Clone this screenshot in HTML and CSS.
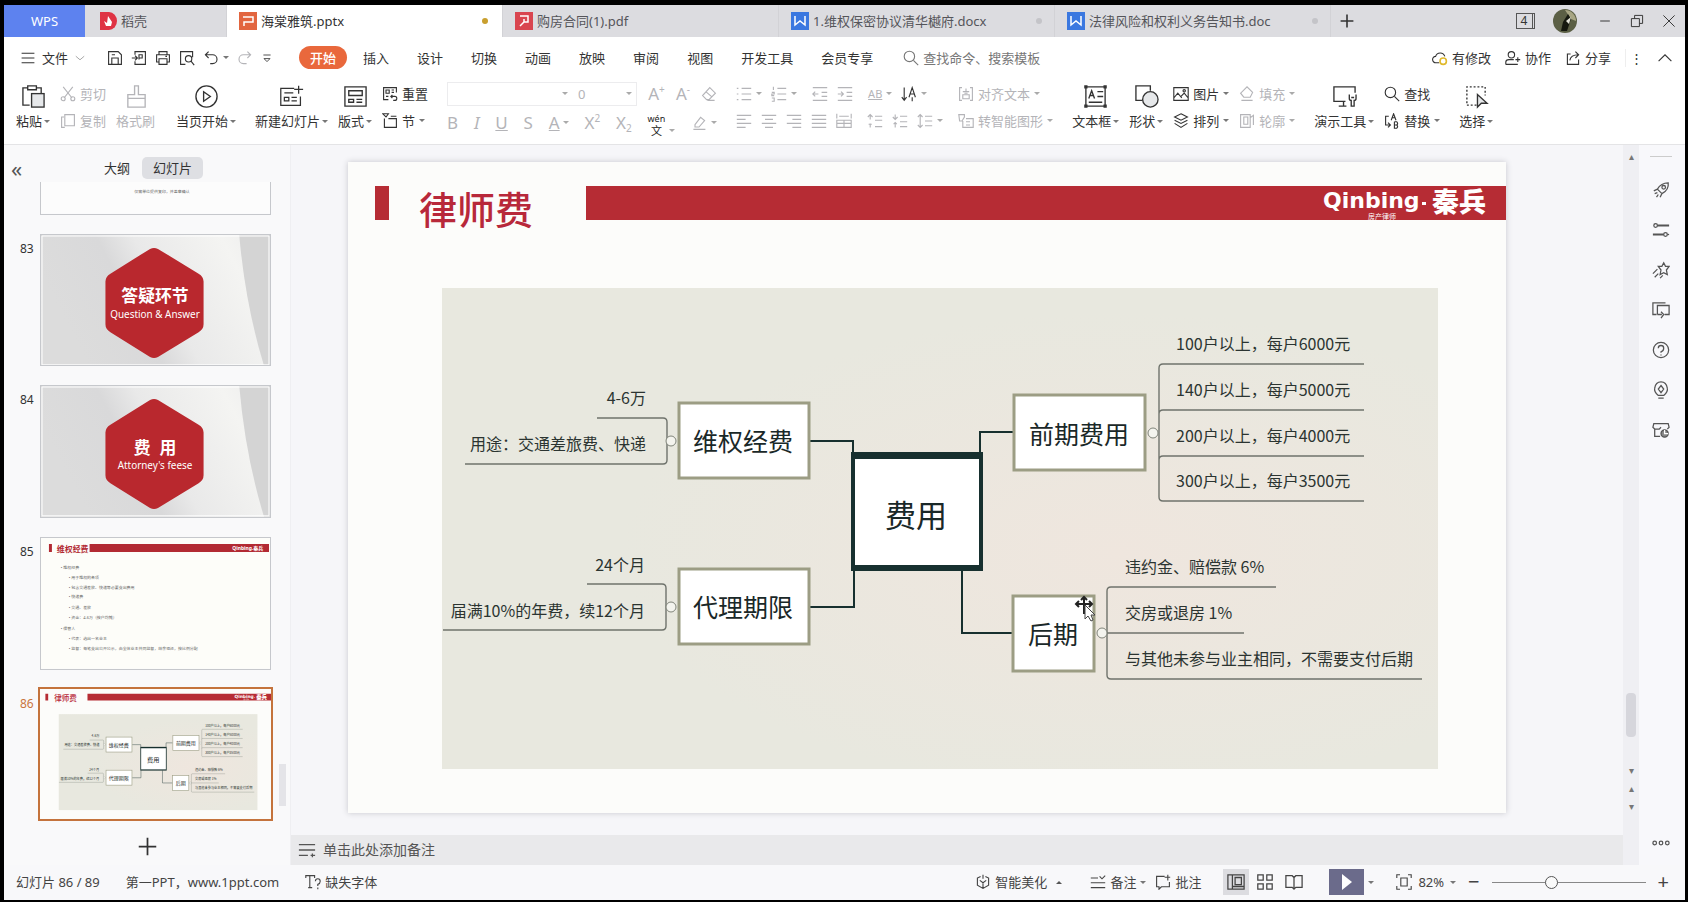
FILE: index.html
```html
<!DOCTYPE html>
<html lang="zh-CN">
<head>
<meta charset="utf-8">
<title>海棠雅筑.pptx - WPS</title>
<link rel="stylesheet" href="styles.css">
</head>
<body>
<svg class="sprite" aria-hidden="true">
  <symbol id="menu" viewBox="0 0 20 20"><path d="M2 4h16M2 10h16M2 16h16"/></symbol>
  <symbol id="down" viewBox="0 0 20 20"><path d="M3 7l7 6 7-6"/></symbol>
  <symbol id="up" viewBox="0 0 20 20"><path d="M2 14l8-8 8 8"/></symbol>
  <symbol id="save" viewBox="0 0 20 20"><path d="M2 2h12l4 4v12H2zM6 18v-8h8v8M6 6h4"/></symbol>
  <symbol id="export" viewBox="0 0 20 20"><path d="M5 6V2h13v16H5v-4M1 10h7M5 7l3 3-3 3M10 12V6h4v4h-4"/></symbol>
  <symbol id="print" viewBox="0 0 20 20"><path d="M5 6V2h10v4M5 15H2V6h16v9h-3M5 11h10v7H5zM13 8h2"/></symbol>
  <symbol id="preview" viewBox="0 0 20 20"><path d="M8 18H2V2h15v7M15 14l4 5"/><circle cx="12" cy="11" r="4"/></symbol>
  <symbol id="undo" viewBox="0 0 20 20"><path d="M7 2L3 6l4 4M3 6h9a5 5 0 0 1 0 11H9"/></symbol>
  <symbol id="redo" viewBox="0 0 20 20"><path d="M13 2l4 4-4 4M17 6H8a5 5 0 0 0 0 11h4"/></symbol>
  <symbol id="more" viewBox="0 0 20 20"><path d="M4 5h12M5 11l5 5 5-5z"/></symbol>
  <symbol id="search" viewBox="0 0 20 20"><circle cx="8" cy="8" r="6.5"/><path d="M13 13l6 6"/></symbol>
  <symbol id="cloud" viewBox="0 0 20 20"><path d="M9 16H5a4 4 0 0 1-.5-8A6 6 0 0 1 16 8"/><circle cx="14" cy="14" r="4" stroke="#e0b92c" stroke-width="2"/></symbol>
  <symbol id="people" viewBox="0 0 20 20"><circle cx="8" cy="6" r="4"/><path d="M1 18v-3q0-3 4-3h6M1 18h15M16 9v6M13 12h6"/></symbol>
  <symbol id="share" viewBox="0 0 20 20"><path d="M7 5H3v13h14v-6M6 13q1-7 11-7M13 2l4 4-4 4"/></symbol>
  <symbol id="paste" viewBox="0 0 26 26"><path d="M9 22H2V4h5M16 4h5v6M7 2h9v4H7z"/><rect x="11" y="10" width="13" height="14" fill="#e6e8ea"/></symbol>
  <symbol id="cut" viewBox="0 0 20 20"><path d="M4 1l11 14M16 1L5 15"/><circle cx="4" cy="16" r="2.5"/><circle cx="16" cy="16" r="2.5"/></symbol>
  <symbol id="copy" viewBox="0 0 20 20"><path d="M6 18H2V5h3M6 2h12v14H6z"/></symbol>
  <symbol id="brush" viewBox="0 0 26 26"><path d="M11 2h4v9h7v4H4v-4h7zM4 15h18v9H4z"/></symbol>
  <symbol id="playc" viewBox="0 0 26 26"><circle cx="13" cy="13" r="11"/><path d="M10 8l7 5-7 5z"/></symbol>
  <symbol id="newslide" viewBox="0 0 28 26"><path d="M17 4H2v19h22V13M22 1v9M17 5h10M6 9h10M6 14h5v4H6zM14 14h6M14 18h6"/></symbol>
  <symbol id="layout" viewBox="0 0 26 26"><path d="M2 3h22v20H2zM6 7h14v5H6zM6 16h5v3H6zM14 16h6M14 19h6"/></symbol>
  <symbol id="reset" viewBox="0 0 20 20"><path d="M8 17H2V2h16v6M5 5h4v4H5zM12 5h3M12 8h3M5 13h3M11 13h5a2 2 0 0 1 0 5h-2M13 11l-2 2 2 2"/></symbol>
  <symbol id="section" viewBox="0 0 20 20"><path d="M1 1h7l-3 4zM3 7v11h15V7H8M11 4h7"/></symbol>
  <symbol id="eraser" viewBox="0 0 20 20"><path d="M11 2l7 7-8 8H7l-5-5zM6 7l8 7M8 18h9"/></symbol>
  <symbol id="bul" viewBox="0 0 20 20"><path d="M7 3h12M7 10h12M7 17h12M1 3h2M1 10h2M1 17h2"/></symbol>
  <symbol id="num" viewBox="0 0 20 20"><path d="M8 3h11M8 10h11M8 17h11M3 1v4M1 8h3v2H1v2h3M1 15h3v4H1"/></symbol>
  <symbol id="outd" viewBox="0 0 20 20"><path d="M1 2h18M12 8h7M12 13h7M1 18h18M8 10H1M4 7l-3 3 3 3"/></symbol>
  <symbol id="ind" viewBox="0 0 20 20"><path d="M1 2h18M12 8h7M12 13h7M1 18h18M1 10h7M5 7l3 3-3 3"/></symbol>
  <symbol id="al" viewBox="0 0 20 20"><path d="M1 3h18M1 8h11M1 13h18M1 18h11"/></symbol>
  <symbol id="ac" viewBox="0 0 20 20"><path d="M1 3h18M5 8h10M1 13h18M5 18h10"/></symbol>
  <symbol id="ar" viewBox="0 0 20 20"><path d="M1 3h18M8 8h11M1 13h18M8 18h11"/></symbol>
  <symbol id="aj" viewBox="0 0 20 20"><path d="M1 3h18M1 8h18M1 13h18M1 18h18"/></symbol>
  <symbol id="dist" viewBox="0 0 20 20"><path d="M1 1v6M19 1v6M4 4h12M1 9h18v9H1zM1 13h18M10 9v9"/></symbol>
  <symbol id="ls" viewBox="0 0 20 20"><path d="M4 2v16M1 5l3-3 3 3M1 15l3 3 3-3M10 4h9M10 10h9M10 16h9"/></symbol>
  <symbol id="sp1" viewBox="0 0 20 20"><path d="M4 8V2M1 5l3-3 3 3M4 18v-5M2 14h4M10 4h9M10 9h9M10 17h9"/></symbol>
  <symbol id="sp2" viewBox="0 0 20 20"><path d="M4 2v6M1 5l3 3 3-3M4 18v-6M2 14l2-2 2 2M10 4h9M10 11h9M10 17h9"/></symbol>
  <symbol id="dir" viewBox="0 0 20 20"><path d="M4 2v16M1 14l3 4 3-4M10 14l4-12 4 12M11 10h6M14 14v5"/></symbol>
  <symbol id="alt" viewBox="0 0 20 20"><path d="M5 2H2v16h3M15 2h3v16h-3M10 3v4M6 7h8M6 11h8v5H6zM8 9h4"/></symbol>
  <symbol id="smart" viewBox="0 0 20 20"><path d="M1 2h7v3l-3 5H2zM6 10v8h13V7h-9M10 11h5M10 15h5"/></symbol>
  <symbol id="hl" viewBox="0 0 20 20"><path d="M5 12l7-9 5 4-7 8H5zM3 18h15"/></symbol>
  <symbol id="tbox" viewBox="0 0 26 26"><path d="M3 3h20v20H3zM6 15l3-8 3 8M7 12h4M15 8h6M15 13h6M6 19h14"/><path fill="currentColor" d="M2 2h2v2H2zM22 2h2v2h-2zM2 22h2v2H2zM22 22h2v2h-2z"/></symbol>
  <symbol id="shape" viewBox="0 0 26 26"><path d="M9 17H2V2h15v5"/><circle cx="17" cy="16" r="8" fill="#e6e8ea"/></symbol>
  <symbol id="pic" viewBox="0 0 20 20"><path d="M1 2h18v16H1zM1 15l5-6 5 6M10 13l4-4 5 6"/><circle cx="14" cy="6" r="1.5"/></symbol>
  <symbol id="stack" viewBox="0 0 20 20"><path d="M10 1l8 4-8 4-8-4zM2 9l8 4 8-4M2 13l8 5 8-5"/></symbol>
  <symbol id="fill" viewBox="0 0 20 20"><path d="M5 6l5-5 7 7-3 6H6L2 9zM3 18h14"/></symbol>
  <symbol id="line" viewBox="0 0 20 20"><path d="M2 2h12v16H2zM6 5h5v9H6zM14 6l4-3v12"/></symbol>
  <symbol id="tool" viewBox="0 0 26 26"><path d="M14 18H2V3h22v6M12 18v5M7 23h8M18 11v4q0 2 2 2v6h3v-6q2 0 2-2v-4M20 14h3"/></symbol>
  <symbol id="rep" viewBox="0 0 20 20"><path d="M6 4H2v11h5M5 12l3 3-3 3M9 9l3-8 3 8M10 6h4M13 11v8h3q2-2 0-4h-3M13 11h3q2 2 0 4"/></symbol>
  <symbol id="sel" viewBox="0 0 26 26"><path d="M13 22H3V3h19v9" stroke-dasharray="2 2"/><path d="M14 11v13l4-4h6z" fill="#e6e8ea"/></symbol>
  <symbol id="rocket" viewBox="0 0 20 20"><path d="M18 2q-8 0-12 7l5 5q8-4 7-12zM6 9l-4 2M3 14l3-1M11 14l-2 4M5 18l2-3"/><circle cx="13" cy="7" r="2"/></symbol>
  <symbol id="sliders" viewBox="0 0 20 20"><path d="M6 5h13M1 15h12" stroke-width="2"/><circle cx="4" cy="5" r="2"/><circle cx="15" cy="15" r="2"/><path d="M17 15h2"/></symbol>
  <symbol id="star" viewBox="0 0 20 20"><path d="M13 2l2 4h4l-3 4 1 5-4-2-4 2 1-5-3-4h4zM6 9l-5 5M7 14l-4 4M12 16l-3 3"/></symbol>
  <symbol id="winarr" viewBox="0 0 20 20"><path d="M5 15H1V2h14M6 15V5h13v10h-5M6 15h5M10 12l3 3-3 4"/></symbol>
  <symbol id="help" viewBox="0 0 20 20"><circle cx="10" cy="10" r="8.5"/><path d="M7 8q0-3 3-3t3 3-3 4v1M10 15v1"/></symbol>
  <symbol id="bulb" viewBox="0 0 20 20"><path d="M7 16q-5-4-4-8 1-7 7-7t7 7q1 4-4 8zM7 19h6M10 5l3 4-3 4-3-4z"/></symbol>
  <symbol id="cam" viewBox="0 0 20 20"><path d="M9 17H3V9L1 7l1-4h16l1 4-2 2M3 9h5l2-2"/><circle cx="14" cy="14" r="4" fill="#888"/><path d="M14 10v4h4" stroke="#fff"/></symbol>
  <symbol id="notes" viewBox="0 0 20 20"><path d="M1 4h18M1 10h18M1 16h10M14 16h5M16 14v4"/></symbol>
  <symbol id="notev" viewBox="0 0 20 20"><path d="M1 5h9M12 3l3 3 4-4M1 11h18M1 17h18"/></symbol>
  <symbol id="font" viewBox="0 0 20 20"><path d="M1 5V2h11v3M6 2v15M4 17h5M13 9q0-3 3-3t3 3-3 4v2M16 17v2"/></symbol>
  <symbol id="cube" viewBox="0 0 20 20"><path d="M7 3L3 5v9l7 4 7-4V5l-4-2M6 8l4 3 4-3M10 11v7M10 1v5"/></symbol>
  <symbol id="comment" viewBox="0 0 20 20"><path d="M12 3H2v13h3v3l3-3h10v-6M16 1v7M12 4h7"/></symbol>
  <symbol id="vnorm" viewBox="0 0 20 20"><path d="M1 2h18v16H1zM6 2v16M9 5h7v8H9zM6 15h13"/></symbol>
  <symbol id="vgrid" viewBox="0 0 20 20"><path d="M2 2h6v6H2zM12 2h6v6h-6zM2 12h6v6H2zM12 12h6v6h-6z"/></symbol>
  <symbol id="vread" viewBox="0 0 20 20"><path d="M1 3h7l2 2 2-2h7v13h-7l-2 2-2-2H1zM10 5v13"/></symbol>
  <symbol id="fit" viewBox="0 0 20 20"><path d="M1 5V1h4M15 1h4v4M19 15v4h-4M5 19H1v-4M6 5h8v10H6z"/></symbol>
  <symbol id="hex" viewBox="0 0 231 132">
    <rect width="231" height="132" fill="#e2e2e2"/>
    <path d="M0 0h231v132H0z" fill="url(#paper)"/>
    <path d="M200 0h31v132h-6Q206 70 200 0z" fill="#d4d4d4"/>
    <path d="M110 14q4-2 8 0l41 25q5 3 5 8v43q0 5-5 8l-41 25q-4 2-8 0L70 98q-5-3-5-8V47q0-5 5-8z" fill="#b9282e"/>
    <path d="M1 1h229v130H1z" fill="none" stroke="#fff"/>
  </symbol>
  <linearGradient id="paper" x1="0" y1="0.3" x2="1" y2="0"><stop offset="0" stop-color="#dcdcdc"/><stop offset="0.3" stop-color="#d9d9da"/><stop offset="0.45" stop-color="#e9e9e9"/><stop offset="0.8" stop-color="#f4f4f2"/><stop offset="1" stop-color="#ececec"/></linearGradient>
</svg>

<div class="app">
  <header class="tabs">
    <button class="home">WPS</button>
    <button class="tab docer"><svg class="logo" viewBox="0 0 18 18"><path d="M1 0h9a8 9 0 0 1 0 18H1z" fill="#df3344"/><path d="M5 9l3 2 1-7 4 6-1 4H7z" fill="#fff"/></svg><span>稻壳</span></button>
    <button class="tab active"><svg class="logo" viewBox="0 0 18 18"><path d="M0 0h18v18H0z" fill="#e2653f"/><path d="M4 5h10v5H5v4" fill="none" stroke="#fff" stroke-width="1.5"/></svg><span>海棠雅筑.pptx</span><i class="dot on"></i></button>
    <button class="tab"><svg class="logo" viewBox="0 0 18 18"><path d="M0 0h18v18H0z" fill="#d9454f"/><path d="M5 4h8v6H9l-4 4M9 7v3" fill="none" stroke="#fff" stroke-width="1.5"/></svg><span>购房合同(1).pdf</span></button>
    <button class="tab"><svg class="logo" viewBox="0 0 18 18"><path d="M0 0h18v18H0z" fill="#3b78e0"/><path d="M4 4v9l5-4 5 4V4" fill="none" stroke="#fff" stroke-width="1.5"/></svg><span>1.维权保密协议清华樾府.docx</span><i class="dot"></i></button>
    <button class="tab"><svg class="logo" viewBox="0 0 18 18"><path d="M0 0h18v18H0z" fill="#3b78e0"/><path d="M4 4v9l5-4 5 4V4" fill="none" stroke="#fff" stroke-width="1.5"/></svg><span>法律风险和权利义务告知书.doc</span><i class="dot"></i></button>
    <button class="plain" aria-label="新建标签"><svg class="ic" viewBox="0 0 20 20"><path d="M10 2v16M2 10h16" stroke-width="2"/></svg></button>
    <div class="win">
      <button class="plain count"><span>4</span></button>
      <svg class="avatar" viewBox="0 0 24 24"><circle cx="12" cy="12" r="12" fill="#5b5f45"/><path d="M12 1a11 11 0 0 1 11 11l-5-2z" fill="#a8a684"/><path d="M8 22l2-9 5-8 3 5-4 12z" fill="#15180f"/><path d="M13 12l5-4-2 7z" fill="#e3e3d8"/></svg>
      <button class="plain" aria-label="最小化"><svg class="ic thin" viewBox="0 0 20 20"><path d="M4 10h12"/></svg></button>
      <button class="plain" aria-label="还原"><svg class="ic thin" viewBox="0 0 20 20"><path d="M3 7h10v10H3zM7 7V3h10v10h-4"/></svg></button>
      <button class="plain" aria-label="关闭"><svg class="ic thin" viewBox="0 0 20 20"><path d="M3 3l14 14M17 3L3 17"/></svg></button>
    </div>
  </header>

  <nav class="menubar">
    <button class="file"><svg class="ic"><use href="#menu"/></svg>文件<svg class="ic s12 dim"><use href="#down"/></svg></button>
    <div class="quick">
      <button aria-label="保存"><svg class="ic"><use href="#save"/></svg></button>
      <button aria-label="输出"><svg class="ic"><use href="#export"/></svg></button>
      <button aria-label="打印"><svg class="ic"><use href="#print"/></svg></button>
      <button aria-label="预览"><svg class="ic"><use href="#preview"/></svg></button>
      <button class="dd" aria-label="撤销"><svg class="ic"><use href="#undo"/></svg></button>
      <button class="off" aria-label="恢复"><svg class="ic"><use href="#redo"/></svg></button>
      <button aria-label="更多"><svg class="ic s12"><use href="#more"/></svg></button>
    </div>
    <button class="current">开始</button>
    <div class="menus">
      <button>插入</button><button>设计</button><button>切换</button><button>动画</button><button>放映</button><button>审阅</button><button>视图</button><button>开发工具</button><button>会员专享</button>
    </div>
    <label class="find"><svg class="ic"><use href="#search"/></svg><input type="text" placeholder="查找命令、搜索模板" aria-label="查找命令"></label>
    <div class="right">
      <button><svg class="ic"><use href="#cloud"/></svg>有修改</button>
      <button><svg class="ic"><use href="#people"/></svg>协作</button>
      <button><svg class="ic"><use href="#share"/></svg>分享</button>
      <button class="kebab" aria-label="更多">⋮</button>
      <button aria-label="收起"><svg class="ic"><use href="#up"/></svg></button>
    </div>
  </nav>

  <div class="ribbon">
    <div class="cluster">
      <button class="big dd"><svg class="ic s24"><use href="#paste"/></svg><span>粘贴</span></button>
      <div class="pair off"><button><svg class="ic"><use href="#cut"/></svg>剪切</button><button><svg class="ic"><use href="#copy"/></svg>复制</button></div>
      <button class="big off"><svg class="ic s24"><use href="#brush"/></svg><span>格式刷</span></button>
    </div>
    <button class="big dd"><svg class="ic s24"><use href="#playc"/></svg><span>当页开始</span></button>
    <div class="cluster">
      <button class="big dd"><svg class="ic s24"><use href="#newslide"/></svg><span>新建幻灯片</span></button>
      <button class="big dd"><svg class="ic s24"><use href="#layout"/></svg><span>版式</span></button>
      <div class="pair"><button><svg class="ic"><use href="#reset"/></svg>重置</button><button class="dd"><svg class="ic"><use href="#section"/></svg>节</button></div>
    </div>
    <div class="pair fonts off">
      <div class="line">
        <span class="combo"><span class="pick wide dd"><select aria-label="字体"><option></option></select></span><span class="pick dd"><select aria-label="字号"><option>0</option></select></span></span>
        <button class="glyph" aria-label="增大字号">A<sup>+</sup></button><button class="glyph" aria-label="减小字号">A<sup>-</sup></button><button aria-label="清除"><svg class="ic"><use href="#eraser"/></svg></button>
      </div>
      <div class="line">
        <button class="glyph">B</button><button class="glyph"><i>I</i></button><button class="glyph"><u>U</u></button><button class="glyph">S</button><button class="glyph dd"><u>A</u></button><button class="glyph">X<sup>2</sup></button><button class="glyph">X<sub>2</sub></button><button class="wen dd"><span>wén</span><span>文</span></button><button class="dd" aria-label="突出显示"><svg class="ic"><use href="#hl"/></svg></button>
      </div>
    </div>
    <div class="pair para off">
      <div class="line">
        <button class="dd" aria-label="项目符号"><svg class="ic"><use href="#bul"/></svg></button><button class="dd" aria-label="编号"><svg class="ic"><use href="#num"/></svg></button><button class="gap" aria-label="减少缩进"><svg class="ic"><use href="#outd"/></svg></button><button aria-label="增加缩进"><svg class="ic"><use href="#ind"/></svg></button><button class="dd gap ab"><u>AB</u></button><button class="dd dark" aria-label="文字方向"><svg class="ic"><use href="#dir"/></svg></button>
      </div>
      <div class="line">
        <button aria-label="左对齐"><svg class="ic"><use href="#al"/></svg></button><button aria-label="居中"><svg class="ic"><use href="#ac"/></svg></button><button aria-label="右对齐"><svg class="ic"><use href="#ar"/></svg></button><button aria-label="两端对齐"><svg class="ic"><use href="#aj"/></svg></button><button aria-label="分散对齐"><svg class="ic"><use href="#dist"/></svg></button><button class="gap" aria-label="段前间距"><svg class="ic"><use href="#sp1"/></svg></button><button aria-label="段后间距"><svg class="ic"><use href="#sp2"/></svg></button><button class="dd" aria-label="行距"><svg class="ic"><use href="#ls"/></svg></button>
      </div>
    </div>
    <div class="pair off"><button class="dd"><svg class="ic"><use href="#alt"/></svg>对齐文本</button><button class="dd"><svg class="ic"><use href="#smart"/></svg>转智能图形</button></div>
    <div class="cluster">
      <button class="big dd"><svg class="ic s24"><use href="#tbox"/></svg><span>文本框</span></button>
      <button class="big dd"><svg class="ic s24"><use href="#shape"/></svg><span>形状</span></button>
      <div class="pair"><button class="dd"><svg class="ic"><use href="#pic"/></svg>图片</button><button class="dd"><svg class="ic"><use href="#stack"/></svg>排列</button></div>
      <div class="pair off"><button class="dd"><svg class="ic"><use href="#fill"/></svg>填充</button><button class="dd"><svg class="ic"><use href="#line"/></svg>轮廓</button></div>
    </div>
    <div class="cluster">
      <button class="big dd"><svg class="ic s24"><use href="#tool"/></svg><span>演示工具</span></button>
      <div class="pair"><button><svg class="ic"><use href="#search"/></svg>查找</button><button class="dd"><svg class="ic"><use href="#rep"/></svg>替换</button></div>
    </div>
    <button class="big dd"><svg class="ic s24"><use href="#sel"/></svg><span>选择</span></button>
  </div>

  <div class="body">
    <aside class="panel">
      <div class="phead"><button class="fold">«</button><button>大纲</button><button class="sel">幻灯片</button></div>
      <ol class="thumbs">
        <li><span></span><svg class="thumb" viewBox="0 0 231 132"><rect width="231" height="132" fill="#fcfcfc"/><text x="122" y="111" class="t5 mid">仅需单位提供复印，并盖章确认</text></svg></li>
        <li><span>83</span><svg class="thumb" viewBox="0 0 231 132"><use href="#hex"/><text x="115" y="68" class="hx">答疑环节</text><text x="115" y="84" class="hs">Question &amp; Answer</text></svg></li>
        <li><span>84</span><svg class="thumb" viewBox="0 0 231 132"><use href="#hex"/><text x="115" y="69" class="hx" xml:space="preserve">费  用</text><text x="115" y="84" class="hs">Attorney's feese</text></svg></li>
        <li><span>85</span><svg class="thumb" viewBox="0 0 231 132"><rect width="231" height="132" fill="#fdfdf9"/><path d="M8 6h3v8H8zM49 6h181v8H49z" fill="#b22a33"/><text x="16" y="14" class="t8">维权经费</text><text x="193" y="12" class="lg">Qinbing.秦兵</text>
          <g class="t5"><text x="20" y="31">• 维权经费</text><text x="28" y="41">• 用于维权的各项</text><text x="28" y="51">• 包含交通差旅、快递等必要支出费用</text><text x="28" y="61">• 快递费</text><text x="28" y="72">• 交通、差旅</text><text x="28" y="82">• 资金：4-6万（按户均摊）</text><text x="20" y="93">• 保管人</text><text x="28" y="103">• 代表：选出一名业主</text><text x="28" y="113">• 监督：每笔支出公开公示，由全体业主共同监督，结余退还，按比例分配</text></g></svg></li>
        <li class="picked"><span>86</span><svg class="thumb" viewBox="0 0 1158 651"><use href="#slide86"/></svg></li>
      </ol>
      <button class="add" aria-label="新建幻灯片"><svg class="ic s24" viewBox="0 0 20 20"><path d="M10 3v14M3 10h14"/></svg></button>
      <i class="pscroll"></i>
    </aside>

    <main class="center">
      <div class="stage">
        <svg class="slide" viewBox="0 0 1158 651">
          <defs><radialGradient id="warm" cx="0.68" cy="0.55" r="0.5"><stop offset="0" stop-color="#efe6de"/><stop offset="1" stop-color="#e8e8df"/></radialGradient></defs>
          <g id="slide86">
            <rect width="1158" height="651" fill="#fcfcfa"/>
            <path d="M27 24h14v34H27zM238 24h920v34H238z" fill="#b62c34"/>
            <text x="71" y="62" class="title">律师费</text>
            <text x="975" y="46" class="brand">Qinbing</text><path d="M1074 40h4v3h-4z" fill="#fff"/><text x="1084" y="50" class="brand zh">秦兵</text><text x="1020" y="57" class="sub">房产律师</text>
            <rect x="94" y="126" width="996" height="481" fill="url(#warm)"/>
            <path d="M462 279h43v14M462 445h44v-38M665 270h-33v22M614 408v63h50" class="trunk"/>
            <path d="M249 256h66q4 0 4 4v38q0 4-4 4H117M239 422h75q4 0 4 4v38q0 4-4 4H95M1016 202H815q-4 0-4 4v129q0 4 4 4h201M811 252q0-4 4-4h201M811 298q0-4 4-4h201M928 425H763q-4 0-4 4v84q0 4 4 4h311M754 471h142" class="twig"/>
            <g class="knob"><circle cx="323" cy="279" r="5"/><circle cx="323" cy="445" r="5"/><circle cx="805" cy="271" r="5"/><circle cx="754" cy="471" r="5"/></g>
            <g class="box"><rect x="331" y="241" width="130" height="75"/><rect x="331" y="407" width="130" height="75"/><rect x="666" y="233" width="131" height="75"/><rect x="665" y="434" width="81" height="75"/></g>
            <path d="M503 290h132v119H503z" fill="#17302f"/><path d="M507 297h124v106H507z" fill="#fff"/>
            <text x="568" y="365" class="core">费用</text>
            <g class="node"><text x="395" y="289">维权经费</text><text x="395" y="455">代理期限</text><text x="731" y="282">前期费用</text><text x="705" y="482">后期</text></g>
            <g class="leaf end"><text x="298" y="242">4-6万</text><text x="298" y="288">用途：交通差旅费、快递</text><text x="297" y="409">24个月</text><text x="297" y="455">届满10%的年费，续12个月</text></g>
            <g class="leaf"><text x="828" y="188">100户以上，每户6000元</text><text x="828" y="234">140户以上，每户5000元</text><text x="828" y="280">200户以上，每户4000元</text><text x="828" y="325">300户以上，每户3500元</text><text x="777" y="411">违约金、赔偿款 6%</text><text x="777" y="457">交房或退房 1%</text><text x="777" y="503">与其他未参与业主相同，不需要支付后期</text></g>
          </g>
          <path d="M736 435v17M728 442h16M733 438l3-3 3 3M731 439l-3 3 3 3M741 439l3 3-3 3" fill="none" stroke="#222" stroke-width="2"/><path d="M737 443v14l3-3 3 5 2-1-2-5h4z" fill="#fff" stroke="#444"/>
        </svg>
      </div>
      <label class="notes"><svg class="ic s18"><use href="#notes"/></svg><input type="text" placeholder="单击此处添加备注" aria-label="备注"></label>
    </main>
    <div class="vscroll"><span>▴</span><i></i><div><span>▾</span><span>▴</span><span>▾</span></div></div>
    <aside class="side">
      <hr>
      <button aria-label="快速工具"><svg class="ic s18"><use href="#rocket"/></svg></button><button aria-label="属性"><svg class="ic s18"><use href="#sliders"/></svg></button><button aria-label="动画"><svg class="ic s18"><use href="#star"/></svg></button><button aria-label="切换"><svg class="ic s18"><use href="#winarr"/></svg></button><button aria-label="帮助"><svg class="ic s18"><use href="#help"/></svg></button><button aria-label="灵感"><svg class="ic s18"><use href="#bulb"/></svg></button><button aria-label="素材"><svg class="ic s18"><use href="#cam"/></svg></button>
      <button class="ooo" aria-label="更多"><svg class="ic s18" viewBox="0 0 20 20"><circle cx="3" cy="10" r="2"/><circle cx="10" cy="10" r="2"/><circle cx="17" cy="10" r="2"/></svg></button>
    </aside>
  </div>

  <footer class="status">
    <span>幻灯片 86 / 89</span><span>第一PPT，www.1ppt.com</span><button><svg class="ic"><use href="#font"/></svg>缺失字体</button>
    <div class="sright">
      <button class="dd upc"><svg class="ic"><use href="#cube"/></svg>智能美化</button>
      <div class="line"><button class="dd"><svg class="ic"><use href="#notev"/></svg>备注</button><button><svg class="ic"><use href="#comment"/></svg>批注</button></div>
      <div class="views"><button class="on" aria-label="普通视图"><svg class="ic s18"><use href="#vnorm"/></svg></button><button aria-label="浏览"><svg class="ic s18"><use href="#vgrid"/></svg></button><button aria-label="阅读"><svg class="ic s18"><use href="#vread"/></svg></button></div>
      <span class="dd"><button class="play" aria-label="放映"><svg viewBox="0 0 10 16"><path d="M0 0l10 8-10 8z" fill="#fff"/></svg></button></span>
      <div class="zoom"><button class="dd"><svg class="ic"><use href="#fit"/></svg>82%</button><button class="pm">−</button><input type="range" min="0" max="100" value="38" aria-label="缩放"><button class="pm">+</button></div>
    </div>
  </footer>
</div>
</body>
</html>
```

FILE: styles.css
```css
* { box-sizing: border-box; }
body {
  margin: 0;
  padding: 5px 3px 2px 4px;
  height: 100vh;
  background: #000;
  color: #333;
  font: 13px/18px "Noto Sans", "Noto Sans CJK SC", sans-serif;
}
button, input, select { font: inherit; color: inherit; border: 0; background: none; padding: 0; margin: 0; }
button { display: inline-flex; align-items: center; gap: 4px; white-space: nowrap; }
.sprite { position: absolute; width: 0; height: 0; }
.app { height: 100%; display: flex; flex-direction: column; background: #f7f7f9; overflow: hidden; }

.ic { width: 16px; height: 16px; flex: none; fill: none; stroke: currentColor; stroke-width: 1.4; }
.s12 { width: 12px; height: 12px; }
.s18 { width: 18px; height: 18px; }
.s24 { width: 25px; height: 25px; }
.thin { stroke-width: 1.2; }
.dim { color: #999; }
.off { color: #b4b4b8; }
.dark { color: #333; }
.dd::after { content: ""; flex: none; border: 3px solid transparent; border-top-color: #777; border-bottom: 0; }
.off.dd::after, .off .dd::after { border-top-color: #aaa; }

/* tab strip */
.tabs { display: flex; height: 32px; background: #dcdce0; }
.home { width: 81px; justify-content: center; background: #5d82ef; color: #fff; }
.tab { flex: 0 1 276px; min-width: 0; padding: 0 12px; color: #55555a; border-right: 1px solid #d2d2d6; }
.docer { flex-basis: 142px; padding-left: 14px; }
.active { background: #fff; color: #333; padding-right: 14px; }
.logo { width: 18px; height: 18px; flex: none; }
.dot { width: 6px; height: 6px; border-radius: 50%; background: #c4c4c8; margin-left: auto; }
.dot.on { background: #c99f2e; }
.plain { justify-content: center; width: 32px; }
.win { margin-left: auto; display: flex; align-items: center; }
.count span { width: 19px; height: 16px; border: 1px solid #555; font-size: 12px; line-height: 14px; border-right-width: 3px; border-right-style: double; }
.avatar { width: 24px; height: 24px; margin: 0 12px; }

/* menu row */
.menubar { display: flex; align-items: center; height: 41px; padding: 0 12px 0 16px; background: #fff; }
.file { gap: 6px; margin-right: 21px; }
.quick { display: flex; gap: 8px; align-items: center; margin-right: 17px; width: 175px; }
.current { height: 23px; padding: 0 11px; border-radius: 12px; background: #e9683c; color: #fff; font-weight: 500; }
.menus { display: flex; gap: 28px; margin: 0 30px 0 16px; }
.find { display: flex; align-items: center; gap: 4px; color: #777; }
.find input { width: 130px; }
input::placeholder { color: inherit; opacity: 1; }
.right { margin-left: auto; display: flex; align-items: center; gap: 14px; }
.kebab { border-left: 1px solid #eee; padding-left: 4px; }

/* ribbon */
.ribbon { display: flex; align-items: center; gap: 19px; height: 67px; padding: 0 12px 8px; background: #fff; border-bottom: 1px solid #e4e4e6; }
.cluster { display: flex; gap: 10px; }
.big { display: grid; grid-template-columns: auto auto; justify-content: center; justify-items: center; align-items: center; gap: 3px 2px; }
.big > .ic { grid-column: 1 / -1; }
.pair { display: flex; flex-direction: column; align-items: flex-start; justify-content: center; gap: 7px; }
.pair > button, .line > button { height: 20px; }
.line { display: flex; align-items: center; gap: 9px; }
.fonts .line { width: 270px; justify-content: space-between; }
.combo { display: flex; width: 190px; height: 24px; border: 1px solid #ececee; }
.pick { display: flex; align-items: center; flex: 1; padding-right: 4px; }
.pick.wide { flex: 2; }
.pick select { flex: 1; appearance: none; padding-left: 6px; width: 20px; outline: 0; }
.glyph { font-size: 17px; gap: 3px; }
.glyph sup, .glyph sub { font-size: 10px; line-height: 10px; margin-left: -3px; }
.glyph sup { align-self: flex-start; }
.glyph sub { align-self: flex-end; }
.wen { display: grid; grid-template-columns: auto auto; justify-items: center; align-items: center; gap: 0 4px; color: #222; font-size: 11px; line-height: 12px; }
.wen span:first-child { grid-column: 1; font-size: 9px; line-height: 12px; }
.wen span:nth-child(2) { grid-row: 2; }
.wen::after { grid-row: 2; }
.para { width: 203px; }
.gap { margin-left: 6px; }
.ab { font-size: 11px; }

/* workspace */
.body { flex: 1; min-height: 0; display: flex; }
.panel { position: relative; width: 287px; display: flex; flex-direction: column; border-right: 1px solid #efeff2; background: #f9f9fa; }
.phead { display: flex; align-items: center; height: 37px; padding: 8px 7px 0; }
.phead .fold { font-size: 22px; color: #555; margin-right: auto; }
.phead .sel { margin: 0 80px 0 12px; padding: 0 11px; height: 22px; border-radius: 5px; background: #dedfe3; }
.thumbs { flex: 1; min-height: 0; overflow: hidden; margin: 0; padding: 0 13px 3px 16px; list-style: none; display: flex; flex-direction: column; justify-content: flex-end; gap: 19px; }
.thumbs li { display: flex; gap: 4px; flex: none; }
.thumbs span { width: 16px; padding-top: 6px; font-size: 12px; }
.thumb { width: 231px; border: 1px solid #c6c8cc; display: block; }
.picked { color: #c9753d; }
.picked .thumb { border: 0; outline: 2px solid #c4733c; }
.add { align-self: center; height: 43px; padding-top: 5px; }
.pscroll { position: absolute; right: 4px; bottom: 59px; width: 7px; height: 42px; background: #e4e4e8; }
.t5 { font-size: 4px; fill: #666; }
.mid, .hx, .hs { text-anchor: middle; }
.t8 { font-size: 8px; font-weight: 700; fill: #b22a33; }
.lg { font-size: 5px; font-weight: 700; fill: #fff; }
.hx { font-size: 17px; font-weight: 700; fill: #fff; }
.hs { font-size: 10px; fill: #fff; }

.center { flex: 1; min-width: 0; display: flex; flex-direction: column; }
.stage { flex: 1; min-height: 0; padding: 17px 117px 20px 57px; background: #f6f6f9; }
.slide { display: block; width: 100%; max-height: 100%; box-shadow: 0 0 6px #c6c6cc; }
#slide86 { font-family: "Noto Sans CJK SC", sans-serif; }
.title { font-size: 38px; font-weight: 500; fill: #b8283a; }
.brand { font: 700 22px "DejaVu Sans", sans-serif; fill: #fff; }
.brand.zh { font: 900 27px "Noto Sans CJK SC", sans-serif; }
.sub { font-size: 7px; fill: #fff; }
.trunk { fill: none; stroke: #17302f; stroke-width: 2; }
.twig { fill: none; stroke: #6f736c; stroke-width: 1.4; }
.knob { fill: #f4f4ee; stroke: #80847a; }
.box { fill: #fff; stroke: #9c9d84; stroke-width: 3; }
.core { font-size: 31px; text-anchor: middle; fill: #1a2828; }
.node { font-size: 25px; text-anchor: middle; fill: #1a2828; }
.leaf { font-size: 16px; fill: #2b3431; }
.end { text-anchor: end; }
.notes { display: flex; align-items: center; gap: 7px; height: 30px; padding: 0 7px; background: #e9e9eb; font-size: 14px; color: #555; }
.notes input { flex: 1; }
.vscroll { width: 16px; display: flex; flex-direction: column; align-items: center; background: #efeff3; color: #777; font-size: 10px; padding: 2px 0 50px; }
.vscroll i { width: 10px; height: 44px; background: #d6d6dc; border-radius: 4px; margin: auto 0 24px; }
.vscroll div { display: flex; flex-direction: column; }
.side { width: 46px; display: flex; flex-direction: column; align-items: center; padding: 0 3px 12px 0; background: #f8f8fb; color: #555; }
.side hr { width: 22px; margin: 11px 0 13px; border: 0; border-top: 1px solid #ccc; }
.side button { height: 40px; }
.side .ooo { margin-top: auto; height: 20px; }

/* status bar */
.status { display: flex; align-items: center; gap: 26px; height: 35px; padding: 0 16px 1px 12px; background: #f8f8fa; color: #444; }
.sright { margin-left: auto; display: flex; align-items: center; gap: 22px; }
.upc { margin-right: 6px; }
.upc::after { border-top: 0; border-bottom: 3px solid #555; margin-left: 5px; }
.views { display: flex; align-items: center; gap: 3px; }
.views button { height: 26px; padding: 0 4px; }
.views .on { background: #dcdce0; }
.sright span.dd { display: flex; align-items: center; gap: 4px; }
.play { width: 35px; height: 26px; justify-content: center; background: #6b6b8b; }
.play svg { width: 10px; height: 16px; }
.zoom { display: flex; align-items: center; gap: 12px; }
.pm { font-size: 20px; }
.zoom button:first-child { gap: 6px; }
.zoom input { width: 154px; height: 16px; appearance: none; }
.zoom input::-webkit-slider-runnable-track { height: 1px; background: #888; }
.zoom input::-webkit-slider-thumb { appearance: none; width: 13px; height: 13px; margin-top: -6px; border: 1px solid #555; border-radius: 50%; background: #fafafa; }
```
